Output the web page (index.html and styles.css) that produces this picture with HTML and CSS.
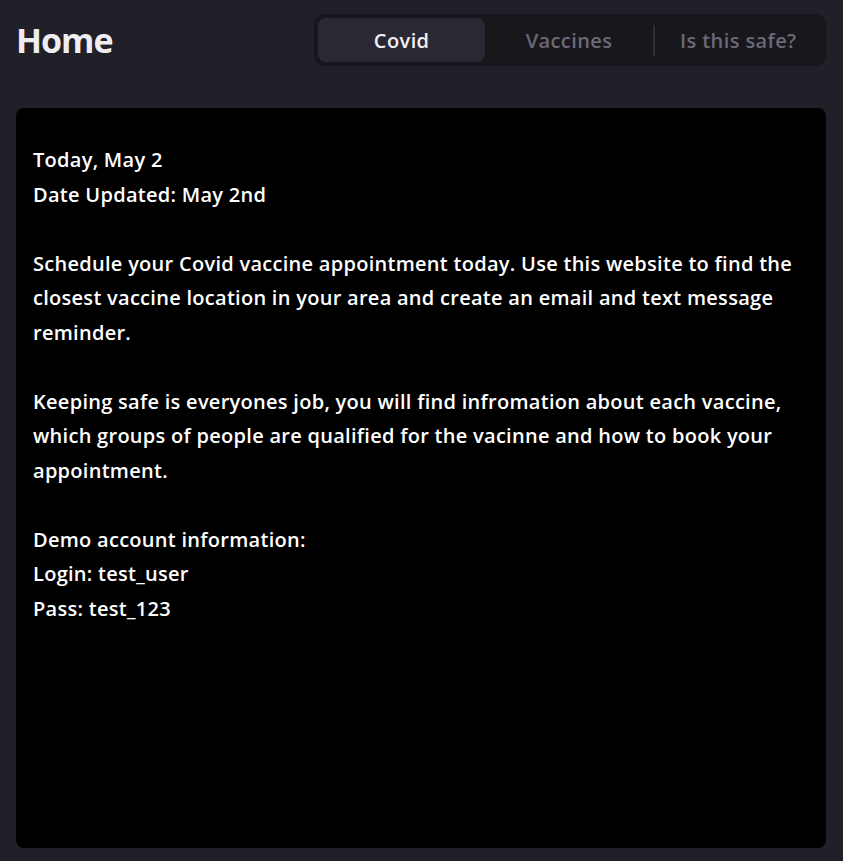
FILE: index.html
```html
<!DOCTYPE html>
<html lang="en">
<head>
<meta charset="utf-8">
<title>Home</title>
<link rel="stylesheet" href="styles.css">
</head>
<body>
<div class="page">
  <header class="header">
    <h1 class="title">Home</h1>
    <nav class="tabs">
      <div class="tab tab-active">Covid</div>
      <div class="tab">Vaccines</div>
      <div class="divider"></div>
      <div class="tab">Is this safe?</div>
    </nav>
  </header>
  <main class="card">
    <p class="para">Today, May 2<br>Date Updated: May 2nd</p>
    <p class="para">Schedule your Covid vaccine appointment today. Use this website to find the<br>closest vaccine location in your area and create an email and text message<br>reminder.</p>
    <p class="para">Keeping safe is everyones job, you will find infromation about each vaccine,<br>which groups of people are qualified for the vacinne and how to book your<br>appointment.</p>
    <p class="para">Demo account information:<br>Login: test_user<br>Pass: test_123</p>
  </main>
</div>
</body>
</html>
```
FILE: styles.css
```css
html, body {
  margin: 0;
  padding: 0;
  background: #211f27;
}
body {
  font-family: "Open Sans", "Liberation Sans", sans-serif;
  color: #ffffff;
}
.page {
  width: 843px;
  height: 861px;
  box-sizing: border-box;
  padding: 14px 17px 13px 16px;
  display: flex;
  flex-direction: column;
}
.header {
  display: flex;
  justify-content: space-between;
  align-items: center;
  height: 52px;
}
.title {
  margin: 0;
  font-size: 34px;
  font-weight: 700;
  color: #eeedf2;
  letter-spacing: -1px;
}
.tabs {
  display: flex;
  align-items: center;
  width: 512px;
  height: 52px;
  box-sizing: border-box;
  padding: 4px;
  background: #18171c;
  border-radius: 10px;
}
.tab {
  flex: 1;
  height: 44px;
  display: flex;
  align-items: center;
  justify-content: center;
  font-size: 20px;
  font-weight: 600;
  letter-spacing: 0.4px;
  color: #6c6977;
  border-radius: 8px;
}
.tab-active {
  background: #2a2832;
  color: #f1f0f5;
}
.divider {
  width: 2px;
  height: 31px;
  background: #2e2c35;
}
.card {
  margin-top: 42px;
  flex: 1;
  background: #000000;
  border-radius: 8px;
  padding: 35px 8px 0 17px;
}
.para {
  margin: 0 0 34.5px 0;
  font-size: 20px;
  line-height: 34.5px;
  font-weight: 600;
  letter-spacing: 0.28px;
  white-space: nowrap;
}
```
